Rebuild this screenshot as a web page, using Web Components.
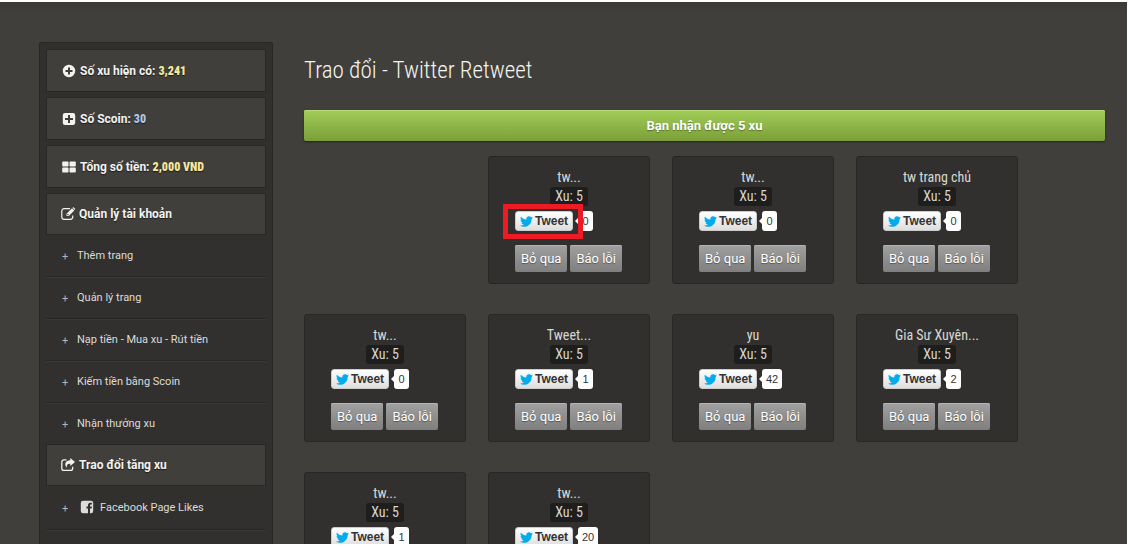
<!DOCTYPE html>
<html lang="vi">
<head>
<meta charset="utf-8">
<title>Trao đổi - Twitter Retweet</title>
<style>
  body {
    margin: 0;
    background: #fff;
  }
</style>
</head>
<body>
<wc-page>
  <wc-sidebar slot="aside">
    <wc-stat icon="plus-circle" label="Số xu hiện có:" value="3,241"></wc-stat>
    <wc-stat icon="plus-square" label="Số Scoin:" value="30" class="blue"></wc-stat>
    <wc-stat icon="th-large" label="Tổng số tiền:" value="2,000 VND"></wc-stat>
    <wc-stat icon="edit" label="Quản lý tài khoản" class="menu"></wc-stat>
    <wc-menu-item>Thêm trang</wc-menu-item>
    <wc-menu-item>Quản lý trang</wc-menu-item>
    <wc-menu-item>Nạp tiền - Mua xu - Rút tiền</wc-menu-item>
    <wc-menu-item>Kiếm tiền bằng Scoin</wc-menu-item>
    <wc-menu-item class="last">Nhận thưởng xu</wc-menu-item>
    <wc-stat icon="share" label="Trao đổi tăng xu" class="menu"></wc-stat>
    <wc-menu-item icon="facebook">Facebook Page Likes</wc-menu-item>
  </wc-sidebar>
  <wc-title>Trao đổi - Twitter Retweet</wc-title>
  <wc-alert>Bạn nhận được 5 xu</wc-alert>
  <wc-card-list>
    <wc-card class="second" name="tw..." coins="5" count="0" marked></wc-card>
    <wc-card name="tw..." coins="5" count="0"></wc-card>
    <wc-card name="tw trang chủ" coins="5" count="0"></wc-card>
    <wc-card name="tw..." coins="5" count="0"></wc-card>
    <wc-card name="Tweet..." coins="5" count="1"></wc-card>
    <wc-card name="yu" coins="5" count="42"></wc-card>
    <wc-card name="Gia Sư Xuyên..." coins="5" count="2"></wc-card>
    <wc-card name="tw..." coins="5" count="1" compact></wc-card>
    <wc-card name="tw..." coins="5" count="20" compact></wc-card>
  </wc-card-list>
</wc-page>

<script>
// every icon is drawn on a 14x14 box, except the bird
const icons = {
  'plus-circle': '<path fill-rule="evenodd" d="M7 .8a6.2 6.2 0 1 1 0 12.4A6.2 6.2 0 0 1 7 .8zM6 3.5V6H3.500v2H6v2.500h2V8h2.500V6H8V3.500z"/>',
  'plus-square': '<path fill-rule="evenodd" d="M3 1h8a2.200 2.200 0 0 1 2.200 2.200v7.600A2.200 2.200 0 0 1 11 13H3A2.200 2.200 0 0 1 .8 10.800V3.200A2.200 2.200 0 0 1 3 1zM6 3v3H3v2h3v3h2V8h3V6H8V3z"/>',
  'th-large': '<path d="M1 1.500h4.700a.8.8 0 0 1 .8.8v3.400a.8.8 0 0 1-.8.800H1a.8.8 0 0 1-.8-.8V2.300A.8.8 0 0 1 1 1.500zM8.300 1.500H13a.8.8 0 0 1 .8.8v3.400a.8.8 0 0 1-.8.800H8.300a.8.8 0 0 1-.8-.8V2.300a.8.8 0 0 1 .8-.8zM1 7.500h4.700a.8.8 0 0 1 .8.8v3.400a.8.8 0 0 1-.8.800H1a.8.8 0 0 1-.8-.8V8.300A.8.8 0 0 1 1 7.500zM8.300 7.500H13a.8.8 0 0 1 .8.8v3.400a.8.8 0 0 1-.8.800H8.300a.8.8 0 0 1-.8-.8V8.300a.8.8 0 0 1 .8-.8z"/>',
  'edit': '<path d="M9 1.700H3A2.200 2.200 0 0 0 .8 3.900v6.200A2.200 2.200 0 0 0 3 12.300h6.500a2.200 2.200 0 0 0 2.200-2.200V8.500" fill="none" stroke="currentColor" stroke-width="1.200"/><path d="M11 1.300l2.300 2.300-5.500 5.500H5.500V6.800zM6.300 7.200v1.100h1.100l.5-.5-1.100-1.100z" fill-rule="evenodd"/><path d="M11.500.8l.4-.4q.5-.4 1 0L14 1.600q.4.500 0 1l-.3.500z"/>',
  'share': '<path d="M5.500 1.800H3A2.200 2.200 0 0 0 .8 4v6.200A2.200 2.200 0 0 0 3 12.400h6.500a2.200 2.200 0 0 0 2.200-2.200V8.800" fill="none" stroke="currentColor" stroke-width="1.300"/><path d="M9.300 0L14 4 9.300 8V5.800C6.500 5.700 5.300 6.900 6 9.800 2.700 6.500 4.500 2.200 9.300 2.200z"/>',
  'facebook': '<path fill-rule="evenodd" d="M3 .8h8A2.200 2.200 0 0 1 13.200 3v8a2.200 2.200 0 0 1-2.200 2.200h-1V8.400h1.600l.3-1.900H10V5.400c0-.6.2-.9.9-.9h1V2.800H10.400C8.700 2.800 8 3.700 8 5.200v1.300H6.500v1.900H8v4.800H3A2.200 2.200 0 0 1 .8 11V3A2.200 2.200 0 0 1 3 .8z"/>',
  'twitter': '<path d="M23.953 4.570a10 10 0 0 1-2.825.775 4.958 4.958 0 0 0 2.163-2.723c-.951.555-2.005.959-3.127 1.184a4.920 4.920 0 0 0-8.384 4.482C7.690 8.095 4.067 6.130 1.640 3.162a4.822 4.822 0 0 0-.666 2.475c0 1.710.870 3.213 2.188 4.096a4.904 4.904 0 0 1-2.228-.616v.060a4.923 4.923 0 0 0 3.946 4.827 4.996 4.996 0 0 1-2.212.085 4.936 4.936 0 0 0 4.604 3.417 9.867 9.867 0 0 1-6.102 2.105c-.390 0-.779-.023-1.170-.067a13.995 13.995 0 0 0 7.557 2.209c9.053 0 13.998-7.496 13.998-13.985 0-.210 0-.420-.015-.630A9.935 9.935 0 0 0 24 4.590z"/>'
};

class wcElement extends HTMLElement {
  constructor() {
    super();
    this.attachShadow({ mode: 'open' });
  }
  attr(name) {
    return this.getAttribute(name) || '';
  }
  connectedCallback() {
    const template = document.createElement('template');
    template.innerHTML = this.getStyle() + this.getTemplate();
    this.shadowRoot.replaceChildren(template.content.cloneNode(true));
  }
}

class wcIcon extends wcElement {
  getTemplate() {
    const name = this.attr('name');
    const box = name === 'twitter' ? '0 0 24 24' : '0 0 14 14';
    return `<svg viewBox="${box}" aria-hidden="true">${icons[name]}</svg>`;
  }
  getStyle() {
    return `
<style>
  :host { display: inline-block; width: 14px; height: 14px; flex: none; }
  svg { display: block; width: 100%; height: 100%; fill: currentColor; overflow: visible; }
</style>`;
  }
}
customElements.define('wc-icon', wcIcon);

class wcPage extends wcElement {
  getTemplate() {
    return `
<div class="page">
  <slot name="aside"></slot>
  <main><slot></slot></main>
</div>`;
  }
  getStyle() {
    return `
<style>
  :host {
    display: block;
    box-sizing: border-box;
    height: 100vh;
    padding: 2px 2px 3px 0;
    overflow: hidden;
    font-family: Roboto, "Liberation Sans", sans-serif;
    color: #e4e4e2;
  }
  .page {
    box-sizing: border-box;
    display: flex;
    align-items: flex-start;
    gap: 31px;
    height: 100%;
    padding: 40px 22px 0 39px;
    overflow: hidden;
    background: linear-gradient(#3b3a37, #403f3b 12px);
  }
  main { flex: 1; min-width: 0; }
</style>`;
  }
}
customElements.define('wc-page', wcPage);

class wcSidebar extends wcElement {
  getTemplate() {
    return `<nav><slot></slot></nav>`;
  }
  getStyle() {
    return `
<style>
  :host { display: block; flex: none; align-self: stretch; width: 234px; }
  nav {
    box-sizing: border-box;
    min-height: 100%;
    padding: 6px;
    background: #31302e;
    border: 1px solid #282725;
    border-bottom: 0;
    border-radius: 3px 3px 0 0;
  }
</style>`;
  }
}
customElements.define('wc-sidebar', wcSidebar);

class wcStat extends wcElement {
  getTemplate() {
    const value = this.attr('value');
    return `
<wc-icon name="${this.attr('icon')}"></wc-icon>
<span>${this.attr('label')}${value ? ` <b>${value}</b>` : ''}</span>`;
  }
  getStyle() {
    return `
<style>
  :host {
    display: flex;
    align-items: center;
    gap: 4px;
    box-sizing: border-box;
    height: 43px;
    margin-bottom: 5px;
    padding-left: 15px;
    background: #403f3b;
    border: 1px solid #282725;
    font-size: 12px;
    font-weight: bold;
    line-height: 16px;
    color: #f2f2f0;
    text-shadow: 0 1px 1px #1c1b1a;
  }
  :host(.menu) { height: 42px; margin-bottom: 0; padding-left: 14px; }
  b { font-family: "Roboto Condensed", Roboto, sans-serif; color: #f3e9a0; }
  :host(.blue) b { color: #a9c8ea; }
</style>`;
  }
}
customElements.define('wc-stat', wcStat);

class wcMenuItem extends wcElement {
  getTemplate() {
    const icon = this.attr('icon');
    return `
<a href="#"><i>+</i>${icon ? `<wc-icon name="${icon}"></wc-icon>` : ''}<slot></slot></a>`;
  }
  getStyle() {
    return `
<style>
  :host {
    display: block;
    border-bottom: 1px solid #282725;
    box-shadow: 0 1px #3a3936;
  }
  :host(.last) { border-bottom: 0; box-shadow: none; }
  a {
    display: flex;
    align-items: center;
    height: 41px;
    padding-left: 16px;
    font-size: 11px;
    color: #dcdcda;
    text-decoration: none;
  }
  :host([icon]) a { height: 43px; }
  i { width: 15px; font-style: normal; color: #b4b4b2; padding-top: 2px; }
  wc-icon { margin: 0 6px 2px 3px; }
</style>`;
  }
}
customElements.define('wc-menu-item', wcMenuItem);

class wcTitle extends wcElement {
  getTemplate() {
    return `<h1><slot></slot></h1>`;
  }
  getStyle() {
    return `
<style>
  :host { display: block; }
  h1 {
    margin: 13px 0 23px;
    font: 300 23px/32px "Roboto Condensed", Roboto, sans-serif;
    color: #f4f4f1;
  }
</style>`;
  }
}
customElements.define('wc-title', wcTitle);

class wcAlert extends wcElement {
  getTemplate() {
    return `<div role="status"><slot></slot></div>`;
  }
  getStyle() {
    return `
<style>
  :host { display: block; margin-bottom: 15px; }
  div {
    border-radius: 2px;
    background: linear-gradient(#a2cd58, #7a9f38);
    box-shadow: inset 0 1px #bcdc7c, 0 1px 2px #22231a;
    font-size: 13px;
    font-weight: bold;
    line-height: 31px;
    text-align: center;
    color: #fff;
    text-shadow: 0 1px 1px #55702a;
  }
</style>`;
  }
}
customElements.define('wc-alert', wcAlert);

class wcCardList extends wcElement {
  getTemplate() {
    return `<slot></slot>`;
  }
  getStyle() {
    return `
<style>
  :host {
    display: grid;
    grid-template-columns: repeat(auto-fill, 162px);
    gap: 30px 22px;
  }
  ::slotted(.second) { grid-column-start: 2; }
</style>`;
  }
}
customElements.define('wc-card-list', wcCardList);

class wcTweet extends wcElement {
  getTemplate() {
    return `
<button type="button"><wc-icon name="twitter"></wc-icon>Tweet</button>
<span>${this.attr('count')}</span>`;
  }
  getStyle() {
    return `
<style>
  :host {
    display: flex;
    gap: 5px;
    position: relative;
    height: 20px;
    font-family: "Liberation Sans", Arial, sans-serif;
  }
  button {
    box-sizing: border-box;
    display: flex;
    align-items: center;
    gap: 2px;
    width: 58px;
    height: 20px;
    padding: 0 0 0 4px;
    border: 1px solid #ccc;
    border-radius: 3px;
    background: linear-gradient(#fff, #dedede);
    font: bold 12px/16px "Liberation Sans", Arial, sans-serif;
    color: #333;
  }
  wc-icon { width: 13px; height: 13px; color: #00aced; }
  span {
    position: relative;
    box-sizing: border-box;
    min-width: 15px;
    padding: 0 4px;
    border-radius: 3px;
    background: #fff;
    font-size: 11px;
    line-height: 20px;
    text-align: center;
    color: #333;
  }
  span::before {
    content: "";
    position: absolute;
    left: -3px;
    top: 7px;
    border: solid transparent;
    border-width: 3px 3px 3px 0;
    border-right-color: #fff;
  }
  /* red frame over the button */
  :host([marked])::after {
    content: "";
    position: absolute;
    box-sizing: border-box;
    left: -12px;
    top: -7px;
    width: 80px;
    height: 35px;
    border: 5px solid #ed1c24;
  }
</style>`;
  }
}
customElements.define('wc-tweet', wcTweet);

class wcCard extends wcElement {
  getButtons() {
    return `
  <div class="buttons">
    <button type="button">Bỏ qua</button>
    <button type="button">Báo lỗi</button>
  </div>`;
  }
  getTemplate() {
    return `
<article>
  <div class="name">${this.attr('name')}</div>
  <div class="coins">Xu: ${this.attr('coins')}</div>
  <wc-tweet count="${this.attr('count')}" ${this.hasAttribute('marked') ? 'marked' : ''}></wc-tweet>
  ${this.hasAttribute('compact') ? '' : this.getButtons()}
</article>`;
  }
  getStyle() {
    return `
<style>
  :host { display: block; }
  article {
    display: flex;
    flex-direction: column;
    align-items: center;
    padding: 10px 26px 11px;
    border: 1px solid #282725;
    border-radius: 3px;
    background: #31302e;
    font: 14px/20px "Roboto Condensed", Roboto, sans-serif;
    color: #d8d8d5;
  }
  .name { white-space: nowrap; }
  .coins {
    padding: 0 5px;
    border-radius: 3px;
    background: #1e1e1d;
    line-height: 19px;
  }
  wc-tweet { align-self: stretch; margin: 5px 0 14px; }
  .buttons { display: flex; align-self: stretch; gap: 3px; }
  .buttons button {
    flex: 0 0 auto;
    height: 27px;
    padding: 0 6px;
    border: 0;
    border-radius: 2px;
    background: linear-gradient(#a0a0a0, #7f7f7f);
    box-shadow: inset 0 1px #b4b4b4;
    font: 13px/27px Roboto, sans-serif;
    color: #fff;
    text-shadow: 0 1px 1px #555;
  }
</style>`;
  }
}
customElements.define('wc-card', wcCard);
</script>
</body>
</html>
